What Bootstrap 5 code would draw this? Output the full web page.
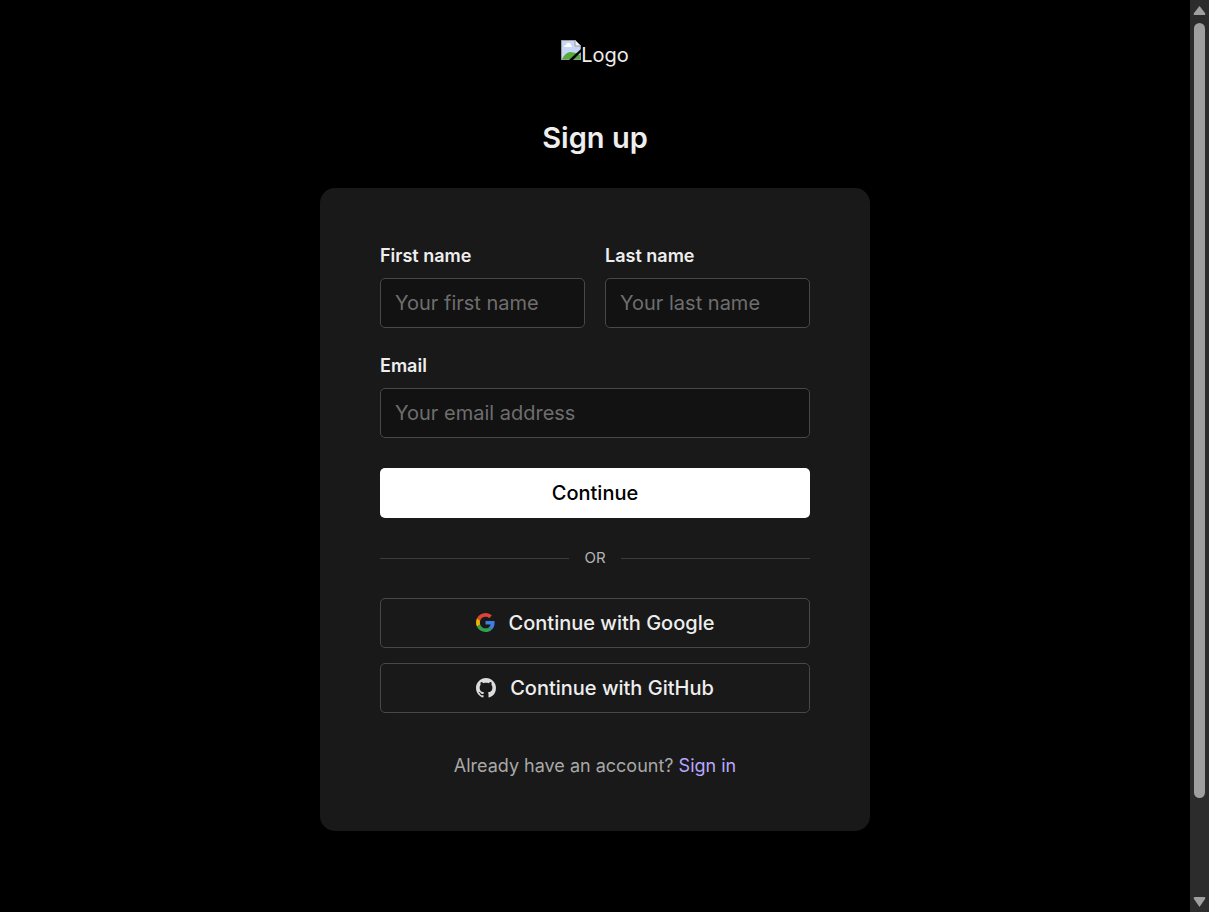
<!DOCTYPE html>
<html lang="en">
<head>
<meta charset="utf-8">
<meta name="viewport" content="width=device-width, initial-scale=1">
<title>Sign up</title>
<link href="https://cdn.jsdelivr.net/npm/bootstrap@5.3.0/dist/css/bootstrap.min.css" rel="stylesheet">
<style>
  body { background: #000; color: #eee; font-family: Inter, sans-serif; font-size: 20px; line-height: 30px; }
  .brand { height: 30px; }
  .page-title { font-size: 29px; line-height: 40px; font-weight: 600; margin: 48px 0 30px; }
  .signup-card { width: 100%; max-width: 550px; padding: 56px 60px 50px; background: #191919; border-radius: 15px; }
  .name-grid { --bs-gutter-x: 20px; }
  .form-label { font-size: 18px; line-height: 24px; font-weight: 600; margin-bottom: 10px; }
  .form-control, .form-control:focus { height: 50px; padding: 0 14px; font-size: 20px; color: #eee; background: #121212; border: 1px solid #484848; border-radius: 5px; box-shadow: none; }
  .form-control::placeholder { color: #6e6e6e; }
  .email-field { margin: 26px 0 30px; }
  .btn { height: 50px; padding: 0 14px; font-size: 20px; line-height: 30px; font-weight: 500; border-radius: 5px; }
  .btn-continue, .btn-continue:hover { background: #fff; color: #000; border: 0; }
  .btn-provider, .btn-provider:hover { color: #eee; border: 1px solid #484848; gap: 14px; }
  .divider { gap: 15px; margin: 30px 0; font-size: 15px; line-height: 20px; color: #b4b4b4; }
  .divider-line { height: 1px; background: #3c3c3c; }
  .provider-list { gap: 15px; }
  .signin-note { font-size: 18px; line-height: 25px; color: #a8a8a8; margin: 40px 0 3px; }
  .signin-note a { color: #baa7ff; }
  .scroll-track { width: 19px; background: #2c2c2c; padding: 6px 0 5px; }
  .scroll-thumb { width: 11px; height: 86%; border-radius: 6px; background: #9f9f9f; }
</style>
</head>
<body class="d-flex min-vh-100">
  <main class="flex-fill d-flex flex-column align-items-center pt-4 pb-5">
    <div class="brand d-flex mt-3">
      <svg width="20" height="20" viewBox="0 0 20 20" aria-hidden="true">
        <path d="M0 0h14l6 6v14H0z" fill="#9b9b9b"/>
        <path d="M1 1h13v5h5v13H1z" fill="#c6d7f8"/>
        <path d="M3 7q0-2 2-2 1-3 3-2 2 0 2 2 1 0 1 2z" fill="#fff"/>
        <path d="M1 19q3-6 8-7 5 0 10 3v4z" fill="#56ab39"/>
        <path d="M14 0v6h6z" fill="#f2f2f2" stroke="#9b9b9b"/>
        <path d="M20 9v3l-8 8H8z" fill="#000"/>
      </svg>
      <span>Logo</span>
    </div>
    <h1 class="page-title">Sign up</h1>

    <section class="signup-card">
      <form>
        <div class="row name-grid">
          <div class="col-6">
            <label class="form-label d-block" for="first">First name</label>
            <input class="form-control" id="first" type="text" placeholder="Your first name">
          </div>
          <div class="col-6">
            <label class="form-label d-block" for="last">Last name</label>
            <input class="form-control" id="last" type="text" placeholder="Your last name">
          </div>
        </div>
        <div class="email-field">
          <label class="form-label d-block" for="email">Email</label>
          <input class="form-control" id="email" type="email" placeholder="Your email address">
        </div>
        <button class="btn btn-continue w-100" type="submit">Continue</button>
      </form>

      <div class="divider d-flex align-items-center">
        <span class="divider-line flex-fill"></span>
        <span>OR</span>
        <span class="divider-line flex-fill"></span>
      </div>

      <div class="provider-list d-grid">
        <button class="btn btn-provider d-flex align-items-center justify-content-center" type="button">
          <svg width="19" height="20" viewBox="0 1 48 48" aria-hidden="true">
            <path fill="#db4437" d="M24 9.5c3.54 0 6.71 1.22 9.21 3.6l6.85-6.85C35.9 2.38 30.47 0 24 0 14.62 0 6.51 5.38 2.56 13.22l7.98 6.19C12.43 13.72 17.74 9.5 24 9.5z"/>
            <path fill="#3f7de0" d="M46.98 24.55c0-1.57-.15-3.09-.38-4.55H24v9.02h12.94c-.58 2.96-2.26 5.48-4.78 7.18l7.73 6c4.51-4.18 7.09-10.36 7.09-17.65z"/>
            <path fill="#f0b400" d="M10.53 28.59c-.48-1.45-.76-2.99-.76-4.59s.27-3.14.76-4.59l-7.98-6.19C.92 16.46 0 20.12 0 24c0 3.88.92 7.54 2.56 10.78z"/>
            <path fill="#31a04f" d="M24 48c6.48 0 11.93-2.13 15.89-5.81l-7.73-6c-2.15 1.45-4.92 2.3-8.16 2.3-6.26 0-11.57-4.22-13.47-9.91l-7.98 6.19C6.51 42.62 14.62 48 24 48z"/>
          </svg>
          <span>Continue with Google</span>
        </button>
        <button class="btn btn-provider d-flex align-items-center justify-content-center" type="button">
          <svg width="20" height="20" viewBox="0 0 16 16" fill="#dcdcdc" aria-hidden="true">
            <path d="M8 0C3.58 0 0 3.58 0 8c0 3.54 2.29 6.53 5.47 7.59.4.07.55-.17.55-.38 0-.19-.01-.82-.01-1.49-2.01.37-2.53-.49-2.69-.94-.09-.23-.48-.94-.82-1.13-.28-.15-.68-.52-.01-.53.63-.01 1.08.58 1.23.82.72 1.21 1.87.87 2.33.66.07-.52.28-.87.51-1.07-1.78-.2-3.64-.89-3.64-3.95 0-.87.31-1.59.82-2.15-.08-.2-.36-1.02.08-2.12 0 0 .67-.21 2.2.82.64-.18 1.32-.27 2-.27s1.36.09 2 .27c1.53-1.04 2.2-.82 2.2-.82.44 1.1.16 1.92.08 2.12.51.56.82 1.27.82 2.15 0 3.07-1.87 3.75-3.65 3.95.29.25.54.73.54 1.48 0 1.07-.01 1.93-.01 2.2 0 .21.15.46.55.38A8.01 8.01 0 0 0 16 8c0-4.42-3.58-8-8-8z"/>
          </svg>
          <span>Continue with GitHub</span>
        </button>
      </div>
      <p class="signin-note text-center">Already have an account? <a class="text-decoration-none" href="#">Sign in</a></p>
    </section>
  </main>

  <div class="scroll-track flex-shrink-0 d-flex flex-column align-items-center" aria-hidden="true">
    <svg class="flex-shrink-0" width="13" height="9" viewBox="0 0 13 9"><path d="M6.500 0L12 7q1 2-1 2H2Q0 9 1 7z" fill="#9f9f9f"/></svg>
    <div class="scroll-thumb mt-2"></div>
    <svg class="flex-shrink-0 mt-auto" width="13" height="10" viewBox="0 0 13 10"><path d="M6.500 10L12 2q1-2-1-2H2Q0 0 1 2z" fill="#9f9f9f"/></svg>
  </div>
<script src="https://cdn.jsdelivr.net/npm/bootstrap@5.3.0/dist/js/bootstrap.bundle.min.js"></script>
</body>
</html>
